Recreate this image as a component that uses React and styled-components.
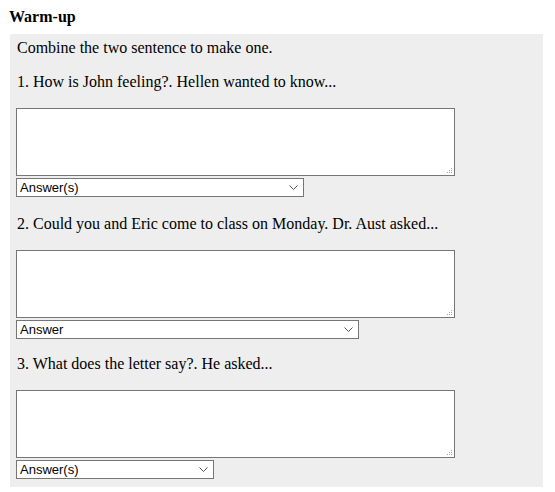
import React from "react";
import styled, { createGlobalStyle } from "styled-components";

const GlobalStyle = createGlobalStyle`
  body {
    margin: 8px;
    background: #ffffff;
    font-family: "Liberation Serif", "Times New Roman", serif;
    font-size: 16px;
    color: #000;
  }
`;

const Heading = styled.div`
  font-weight: bold;
  line-height: 18px;
  height: 18px;
  margin: 0 0 8px 1px;
`;

const Panel = styled.div`
  margin-left: 2px;
  width: 533px;
  box-sizing: border-box;
  background: #eeeeee;
  padding: 5px 6px 8px 6px;
`;

const Line = styled.p`
  margin: 0 0 16px 1px;
  line-height: 18px;
`;

const Question = styled.div`
  display: flex;
  flex-direction: column;
  align-items: flex-start;
  margin-bottom: ${(p) => p.$after}px;

  &:last-child {
    margin-bottom: 0;
  }
`;

const Prompt = styled.p`
  margin: 0 0 17px 1px;
  line-height: 18px;
`;

const BoxWrap = styled.div`
  position: relative;
  width: 439px;
  height: 68px;
`;

const AnswerBox = styled.textarea`
  display: block;
  box-sizing: border-box;
  width: 100%;
  height: 100%;
  margin: 0;
  border: 1px solid #767676;
  background: #fff;
  resize: none;
  font-family: "Liberation Mono", monospace;
  font-size: 13px;
`;

const Grip = styled.svg`
  position: absolute;
  right: 3px;
  bottom: 3px;
  width: 5px;
  height: 5px;
  pointer-events: none;
`;

const SelectWrap = styled.div`
  position: relative;
  margin-top: 2px;
  width: ${(p) => p.$w}px;
  height: 19px;
`;

const AnswerSelect = styled.select`
  display: block;
  box-sizing: border-box;
  width: 100%;
  height: 100%;
  margin: 0;
  padding: 0 0 0 3px;
  border: 1px solid #767676;
  border-radius: 0;
  background: #fff;
  appearance: none;
  font-family: "Liberation Sans", Arial, sans-serif;
  font-size: 13px;
  color: #000;
`;

const Chevron = styled.svg`
  position: absolute;
  right: 6px;
  top: 7px;
  width: 9px;
  height: 5px;
  pointer-events: none;
`;

const questions = [
  { text: "1. How is John feeling?. Hellen wanted to know...", label: "Answer(s)", w: 288, after: 18 },
  { text: "2. Could you and Eric come to class on Monday. Dr. Aust asked...", label: "Answer", w: 343, after: 16 },
  { text: "3. What does the letter say?. He asked...", label: "Answer(s)", w: 198, after: 0 },
];

export default function App() {
  return (
    <>
      <GlobalStyle />
      <Heading>Warm-up</Heading>
      <Panel>
        <Line>Combine the two sentence to make one.</Line>
        {questions.map((q) => (
          <Question key={q.text} $after={q.after}>
            <Prompt>{q.text}</Prompt>
            <BoxWrap>
              <AnswerBox />
              <Grip viewBox="0 0 5 5">
                <g fill="#a8a8a8">
                  <rect x="4" y="0" width="1" height="1" />
                  <rect x="2" y="2" width="1" height="1" />
                  <rect x="4" y="2" width="1" height="1" />
                  <rect x="0" y="4" width="1" height="1" />
                  <rect x="2" y="4" width="1" height="1" />
                  <rect x="4" y="4" width="1" height="1" />
                </g>
              </Grip>
            </BoxWrap>
            <SelectWrap $w={q.w}>
              <AnswerSelect defaultValue="">
                <option value="">{q.label}</option>
              </AnswerSelect>
              <Chevron viewBox="0 0 9 5">
                <path d="M0.5 0.5 L4.5 4.5 L8.5 0.5" fill="none" stroke="#555" strokeWidth="1" />
              </Chevron>
            </SelectWrap>
          </Question>
        ))}
      </Panel>
    </>
  );
}
